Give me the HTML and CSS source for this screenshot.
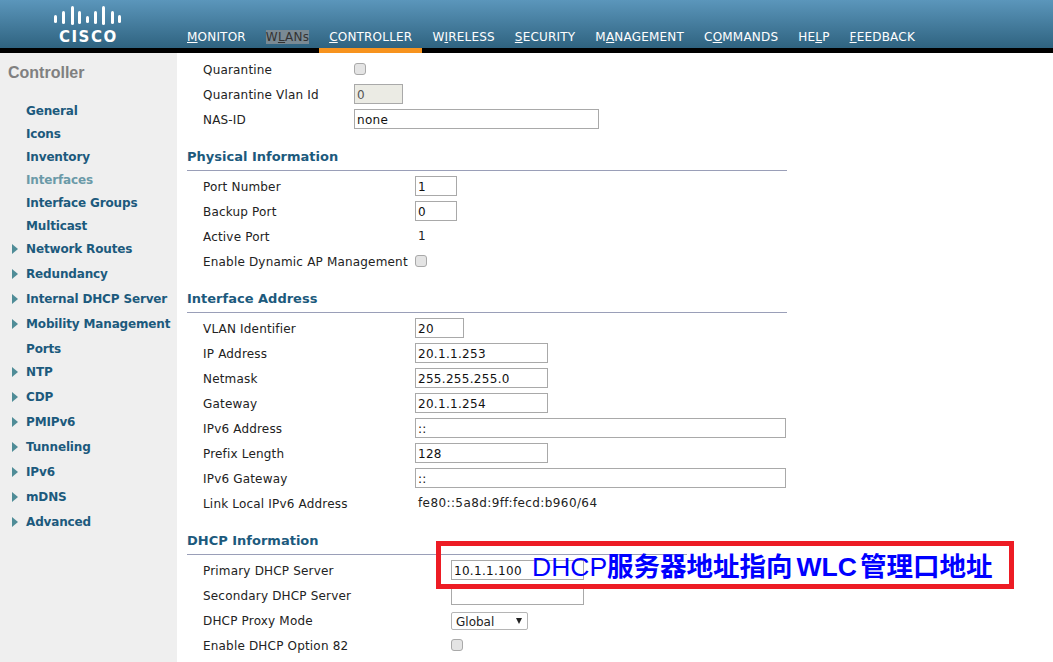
FILE: index.html
```html
<!DOCTYPE html>
<html lang="en">
<head>
    <meta charset="UTF-8">
    <title>Controller - Interfaces</title>
    <link rel="stylesheet" href="styles.css">
</head>
<body>
    <div class="header">
        <div class="logo">
            <svg class="logo-bars" width="68" height="26" viewBox="0 0 68 26">
                <g fill="#fff">
                    <rect x="0" y="15" width="3" height="8" rx="1.5"/>
                    <rect x="8" y="11" width="3" height="13" rx="1.5"/>
                    <rect x="17" y="6" width="3" height="19" rx="1.5"/>
                    <rect x="24" y="11" width="3" height="13" rx="1.5"/>
                    <rect x="32" y="16" width="3" height="7" rx="1.5"/>
                    <rect x="40" y="11" width="3" height="13" rx="1.5"/>
                    <rect x="48" y="6" width="3" height="19" rx="1.5"/>
                    <rect x="57" y="11" width="3" height="13" rx="1.5"/>
                    <rect x="64" y="15" width="3" height="8" rx="1.5"/>
                </g>
            </svg>
            <div class="logo-text">CISCO</div>
        </div>
        <div class="menu">
            <a><u>M</u>ONITOR</a>
            <a><span class="hover">W<u>L</u>ANs</span></a>
            <a class="active"><u>C</u>ONTROLLER</a>
            <a>W<u>I</u>RELESS</a>
            <a><u>S</u>ECURITY</a>
            <a>M<u>A</u>NAGEMENT</a>
            <a>C<u>O</u>MMANDS</a>
            <a>HE<u>L</u>P</a>
            <a><u>F</u>EEDBACK</a>
        </div>
    </div>
    <div class="main">
        <div class="sidebar">
            <div class="side-title">Controller</div>
            <ul class="side-list">
                <li>General</li>
                <li>Icons</li>
                <li>Inventory</li>
                <li class="current">Interfaces</li>
                <li>Interface Groups</li>
                <li>Multicast</li>
                <li class="more">Network Routes</li>
                <li class="more">Redundancy</li>
                <li class="more">Internal DHCP Server</li>
                <li class="more">Mobility Management</li>
                <li>Ports</li>
                <li class="more">NTP</li>
                <li class="more">CDP</li>
                <li class="more">PMIPv6</li>
                <li class="more">Tunneling</li>
                <li class="more">IPv6</li>
                <li class="more">mDNS</li>
                <li class="more">Advanced</li>
            </ul>
        </div>
        <div class="content">
            <div class="rows col-top">
                <label>Quarantine</label><div><span class="check"></span></div>
                <label>Quarantine Vlan Id</label><div><input class="w-s off" value="0" disabled></div>
                <label>NAS-ID</label><div><input class="w-xl" value="none"></div>
            </div>

            <h3>Physical Information</h3>
            <div class="rows col-mid">
                <label>Port Number</label><div><input class="w-xs" value="1"></div>
                <label>Backup Port</label><div><input class="w-xs" value="0"></div>
                <label>Active Port</label><div class="plain">1</div>
                <label>Enable Dynamic AP Management</label><div><span class="check"></span></div>
            </div>

            <h3>Interface Address</h3>
            <div class="rows col-mid">
                <label>VLAN Identifier</label><div><input class="w-s" value="20"></div>
                <label>IP Address</label><div><input class="w-m" value="20.1.1.253"></div>
                <label>Netmask</label><div><input class="w-m" value="255.255.255.0"></div>
                <label>Gateway</label><div><input class="w-m" value="20.1.1.254"></div>
                <label>IPv6 Address</label><div><input class="w-l" value="::"></div>
                <label>Prefix Length</label><div><input class="w-m" value="128"></div>
                <label>IPv6 Gateway</label><div><input class="w-l" value="::"></div>
                <label>Link Local IPv6 Address</label><div class="plain">fe80::5a8d:9ff:fecd:b960/64</div>
            </div>

            <h3>DHCP Information</h3>
            <div class="rows col-dhcp">
                <label>Primary DHCP Server</label><div><input class="w-m" value="10.1.1.100"></div>
                <label>Secondary DHCP Server</label><div><input class="w-m" value=""></div>
                <label>DHCP Proxy Mode</label><div><span class="select">Global<i></i></span></div>
                <label>Enable DHCP Option 82</label><div><span class="check"></span></div>
            </div>
        </div>
    </div>
    <div class="note">
        <div class="note-text"><span class="thin">DHCP</span>服务器地址指向<span class="latin">WLC</span>管理口地址</div>
    </div>
</body>
</html>
```

FILE: styles.css
```css
html, body {
    margin: 0;
    height: 662px;
    overflow: hidden;
    background: #fff;
}

body {
    position: relative;
    font-family: "DejaVu Sans", Verdana, sans-serif;
    font-size: 12px;
    color: #222;
}

/* header */
.header {
    height: 48px;
    border-bottom: 5px solid #000;
    background: linear-gradient(#5b96bb, #2f6380);
    display: flex;
}

.logo {
    width: 177px;
    flex: none;
    padding-left: 54px;
    box-sizing: border-box;
}

.logo-bars {
    display: block;
}

.logo-text {
    margin: 4px 0 0 5px;
    font-weight: bold;
    font-size: 15px;
    line-height: 15px;
    letter-spacing: 1.5px;
    color: #fff;
}

.menu {
    display: flex;
    align-items: flex-end;
}

.menu a {
    position: relative;
    height: 14px;
    padding: 0 10px 4px;
    color: #fff;
    font-size: 12px;
    line-height: 14px;
    letter-spacing: 0.2px;
}

.menu .hover {
    display: block;
    background: #7a8a94;
    color: #333;
}

.menu a.active::after {
    content: "";
    position: absolute;
    left: 0;
    right: 0;
    bottom: -5px;
    height: 5px;
    background: #f7931e;
}

/* sidebar */
.main {
    display: flex;
    height: 609px;
}

.sidebar {
    width: 177px;
    flex: none;
    background: #efefef;
}

.side-title {
    padding: 11px 0 0 8px;
    font-family: "Liberation Sans", Arial, sans-serif;
    font-weight: bold;
    font-size: 16px;
    line-height: 18px;
    color: #808080;
}

.side-list {
    list-style: none;
    margin: 0;
    padding: 18px 0 0 26px;
}

.side-list li {
    position: relative;
    line-height: 23px;
    font-weight: bold;
    font-size: 12px;
    letter-spacing: -0.15px;
    color: #1c5a7d;
    white-space: nowrap;
}

.side-list li.current {
    color: #6b9aa8;
}

.side-list li.more {
    padding-bottom: 2px;
}

.side-list li.more::before {
    content: "";
    position: absolute;
    left: -14px;
    top: 6px;
    border-left: 6px solid #4f8c97;
    border-top: 5.5px solid transparent;
    border-bottom: 5.5px solid transparent;
}

/* form */
.content {
    padding: 4px 0 0 10px;
}

.rows {
    display: grid;
    grid-auto-rows: 25px;
    padding-left: 16px;
}

.col-top { grid-template-columns: 151px auto; }
.col-mid { grid-template-columns: 212px auto; }
.col-dhcp { grid-template-columns: 248px auto; }

.rows label {
    height: 25px;
    line-height: 27px;
    letter-spacing: 0.18px;
    white-space: nowrap;
}

.rows > div {
    padding-top: 2px;
}

h3 {
    width: 600px;
    height: 38px;
    margin: 0 0 3px;
    border-bottom: 1px solid #9a9fb8;
    font-size: 13px;
    line-height: 50px;
    font-weight: bold;
    color: #1c5a7d;
}

input {
    display: block;
    height: 20px;
    box-sizing: border-box;
    padding: 1px 2px 0;
    border: 1px solid #a9a9a9;
    background: #fff;
    font-family: "DejaVu Sans", Verdana, sans-serif;
    font-size: 12px;
    letter-spacing: 0.3px;
    color: #111;
}

input.off {
    background: #ebebe4;
    color: #555;
}

.w-xs { width: 42px; }
.w-s { width: 49px; }
.w-m { width: 133px; }
.w-xl { width: 245px; }
.w-l { width: 371px; }

.rows > .plain {
    padding: 0 0 0 3px;
    line-height: 25px;
    letter-spacing: 0.4px;
}

.check {
    display: block;
    width: 12px;
    height: 12px;
    margin-top: 4px;
    box-sizing: border-box;
    border: 1px solid #a9a9a9;
    border-radius: 3px;
    background: #e4e4e4;
}

.select {
    position: relative;
    display: block;
    width: 77px;
    height: 18px;
    margin-top: 2px;
    box-sizing: border-box;
    padding-left: 4px;
    border: 1px solid #b5b5b5;
    border-radius: 2px;
    line-height: 18px;
}

.select i {
    position: absolute;
    right: 5px;
    top: 5px;
    border-top: 6px solid #222;
    border-left: 3px solid transparent;
    border-right: 3px solid transparent;
}

/* annotation laid over the screenshot */
.note {
    position: absolute;
    left: 436px;
    top: 541px;
    width: 578px;
    height: 48px;
    box-sizing: border-box;
    border: 5px solid #ed1c24;
}

/* the heading rule stops part way along the box */
.note::before {
    content: "";
    position: absolute;
    left: 246px;
    right: 0;
    top: 7px;
    height: 3px;
    background: #fff;
}

.note-text {
    position: absolute;
    left: 91px;
    top: 3px;
    font-family: "Noto Sans CJK SC", sans-serif;
    font-weight: bold;
    font-size: 26.5px;
    line-height: 32px;
    color: #0000ff;
    white-space: nowrap;
}

.note-text .thin {
    font-family: "Liberation Sans", Arial, sans-serif;
    font-weight: normal;
}

.note-text .latin {
    margin: 0 3px 0 4px;
    font-family: "Liberation Sans", Arial, sans-serif;
}
```
